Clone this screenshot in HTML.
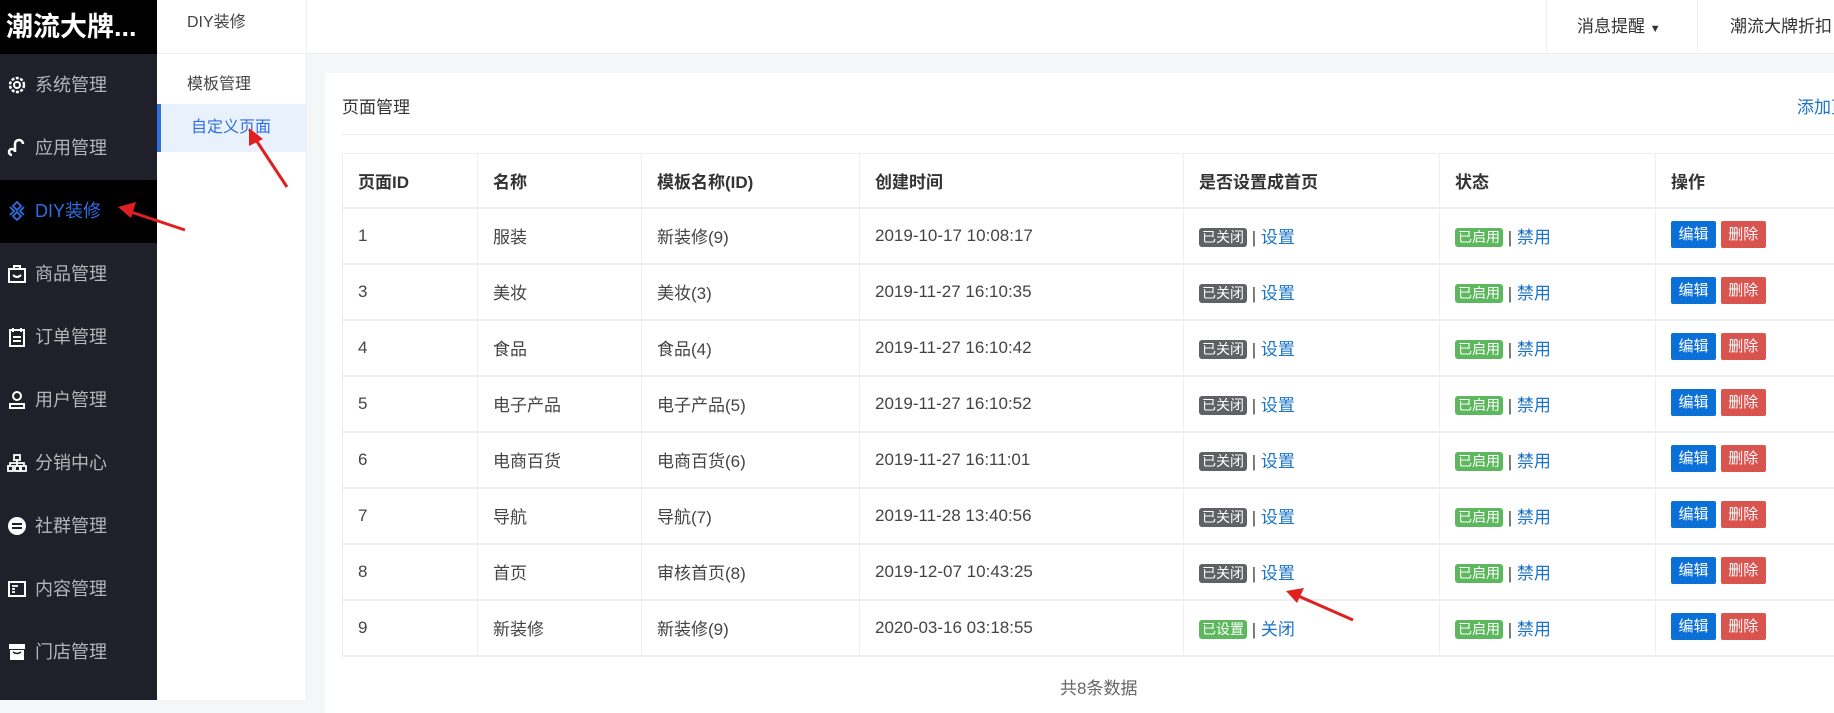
<!DOCTYPE html>
<html><head><meta charset="utf-8"><style>
*{margin:0;padding:0;box-sizing:border-box}
body{width:1834px;height:700px;overflow:hidden;position:relative;background:#f5f6f7;font-family:"Liberation Sans","Noto Sans CJK SC",sans-serif;color:#333}
.abs{position:absolute}
#side{left:0;top:0;width:157px;height:700px;background:#1f2029}
#logo{left:0;top:0;width:157px;height:54px;background:#000;color:#fff;font-size:27px;font-weight:bold;line-height:54px;padding-left:6px;white-space:nowrap;overflow:hidden}
.mi{position:absolute;left:0;width:157px;height:63px;line-height:63px;color:#b4b5ba;font-size:18px;padding-left:35px}
.mi svg{position:absolute;left:7px;top:21px}
.mi.on{background:#000;color:#2f6ee0}
#sub{left:157px;top:0;width:150px;height:700px;background:#fff;border-right:1px solid #eee}
#top{left:307px;top:0;width:1527px;height:54px;background:#fff;border-bottom:1px solid #eee}
.card{left:325px;top:73px;width:1520px;height:640px;background:#fff}
table{position:absolute;left:342px;top:153px;border-collapse:collapse;font-size:17px;table-layout:fixed;width:1500px}
td,th{border:1px solid #eee;border-bottom:2px solid #eee;text-align:left;padding-left:15px;height:56px;color:#444;font-weight:normal;vertical-align:middle;white-space:nowrap}
th{font-weight:bold;color:#333;height:54px}
.b{display:inline-block;font-size:14px;color:#fff;border-radius:3px;padding:0 3px;line-height:19px;position:relative;top:-1px}
.g{background:#5f6165}.gr{background:#5cb85c}
.a{color:#1a73c8}
.btn{display:inline-block;font-size:15px;color:#fff;width:45px;height:27px;line-height:27px;text-align:center;border-radius:2px;position:relative;top:-1px}
</style></head><body>
<div id="side" class="abs">
<div id="logo" class="abs">潮流大牌...</div>
<div class="mi" style="top:54px"><svg width="20" height="20" viewBox="0 0 20 20"><circle cx="10" cy="10" r="7" fill="none" stroke="#fff" stroke-width="2.5" stroke-dasharray="3 1.5"/><circle cx="10" cy="10" r="3" fill="none" stroke="#fff" stroke-width="2"/></svg>系统管理</div>
<div class="mi" style="top:117px"><svg width="20" height="20" viewBox="0 0 20 20"><path d="M5 17a3 3 0 1 1 3-3V6a4 4 0 0 1 8 0" fill="none" stroke="#fff" stroke-width="2.5"/></svg>应用管理</div>
<div class="mi on" style="top:180px"><svg width="20" height="20" viewBox="0 0 20 20"><path d="M10 1l4 4-4 4-4-4zM10 11l4 4-4 4-4-4zM3 6l4 4-4 4M17 6l-4 4 4 4" fill="none" stroke="#2f6ee0" stroke-width="1.8"/></svg>DIY装修</div>
<div class="mi" style="top:243px"><svg width="20" height="20" viewBox="0 0 20 20"><rect x="2" y="5" width="16" height="13" fill="none" stroke="#fff" stroke-width="2"/><path d="M7 5V2h6v3M6 11q4 4 8 0" fill="none" stroke="#fff" stroke-width="2"/></svg>商品管理</div>
<div class="mi" style="top:306px"><svg width="20" height="20" viewBox="0 0 20 20"><rect x="3" y="3" width="14" height="16" fill="none" stroke="#fff" stroke-width="2"/><path d="M6 1v4M14 1v4M6 10h8M6 14h8" stroke="#fff" stroke-width="2"/></svg>订单管理</div>
<div class="mi" style="top:369px"><svg width="20" height="20" viewBox="0 0 20 20"><circle cx="10" cy="6" r="4" fill="none" stroke="#fff" stroke-width="2"/><path d="M3 18v-4h14v4z" fill="none" stroke="#fff" stroke-width="2"/></svg>用户管理</div>
<div class="mi" style="top:432px"><svg width="20" height="20" viewBox="0 0 20 20"><rect x="7" y="2" width="6" height="5" fill="none" stroke="#fff" stroke-width="1.8"/><rect x="1" y="13" width="5" height="5" fill="none" stroke="#fff" stroke-width="1.8"/><rect x="8" y="13" width="5" height="5" fill="none" stroke="#fff" stroke-width="1.8"/><rect x="14" y="13" width="5" height="5" fill="none" stroke="#fff" stroke-width="1.8"/><path d="M10 7v6M3 13v-3h14v3" fill="none" stroke="#fff" stroke-width="1.8"/></svg>分销中心</div>
<div class="mi" style="top:495px"><svg width="20" height="20" viewBox="0 0 20 20"><circle cx="10" cy="10" r="9" fill="#fff"/><path d="M5 8h10M5 12h10" stroke="#1f2029" stroke-width="2"/></svg>社群管理</div>
<div class="mi" style="top:558px"><svg width="20" height="20" viewBox="0 0 20 20"><rect x="2" y="3" width="16" height="14" fill="none" stroke="#fff" stroke-width="2"/><path d="M5 7h6M5 10h3M5 13h3" stroke="#fff" stroke-width="1.8"/></svg>内容管理</div>
<div class="mi" style="top:621px"><svg width="20" height="20" viewBox="0 0 20 20"><rect x="2" y="2" width="16" height="5" fill="#fff"/><rect x="3" y="8" width="14" height="10" fill="#fff"/><path d="M6 10q4 3 8 0" stroke="#1f2029" stroke-width="1.5" fill="none"/></svg>门店管理</div>
</div>
<div id="sub" class="abs">
<div class="abs" style="left:0;top:0;width:149px;height:54px;border-bottom:1px solid #eee;line-height:46px;padding-left:30px;font-size:16px;color:#444">DIY装修</div>
<div class="abs" style="left:30px;top:70px;font-size:16px;color:#444">模板管理</div>
<div class="abs" style="left:0;top:104px;width:149px;height:48px;background:#e9f1fd;border-left:4px solid #2f6ee0;line-height:48px;padding-left:30px;font-size:16px;color:#2f6ee0">自定义页面</div>
</div>
<div id="top" class="abs">
<div class="abs" style="left:1239px;top:0;width:1px;height:54px;background:#eee"></div>
<div class="abs" style="left:1390px;top:0;width:1px;height:54px;background:#eee"></div>
<div class="abs" style="left:1270px;top:12px;font-size:17px;color:#333">消息提醒 <span style="font-size:11px">▼</span></div>
<div class="abs" style="left:1423px;top:12px;font-size:17px;color:#333;white-space:nowrap">潮流大牌折扣</div>
</div>
<div class="card abs"></div>
<div class="abs" style="left:342px;top:93px;font-size:17px;color:#333">页面管理</div>
<div class="abs" style="left:1797px;top:93px;font-size:17px;color:#1a73c8;white-space:nowrap">添加页</div>
<div class="abs" style="left:342px;top:134px;width:1500px;height:1px;background:#eee"></div>
<table>
<colgroup><col style="width:135px"><col style="width:164px"><col style="width:218px"><col style="width:324px"><col style="width:256px"><col style="width:216px"><col style="width:187px"></colgroup>
<tr><th>页面ID</th><th>名称</th><th>模板名称(ID)</th><th>创建时间</th><th>是否设置成首页</th><th>状态</th><th>操作</th></tr>
<tr><td>1</td><td>服装</td><td>新装修(9)</td><td>2019-10-17 10:08:17</td><td><span class="b g">已关闭</span> | <span class="a">设置</span></td><td><span class="b gr">已启用</span> | <span class="a">禁用</span></td><td><span class="btn" style="background:#0a6fd6">编辑</span> <span class="btn" style="background:#d9534f">删除</span></td></tr>
<tr><td>3</td><td>美妆</td><td>美妆(3)</td><td>2019-11-27 16:10:35</td><td><span class="b g">已关闭</span> | <span class="a">设置</span></td><td><span class="b gr">已启用</span> | <span class="a">禁用</span></td><td><span class="btn" style="background:#0a6fd6">编辑</span> <span class="btn" style="background:#d9534f">删除</span></td></tr>
<tr><td>4</td><td>食品</td><td>食品(4)</td><td>2019-11-27 16:10:42</td><td><span class="b g">已关闭</span> | <span class="a">设置</span></td><td><span class="b gr">已启用</span> | <span class="a">禁用</span></td><td><span class="btn" style="background:#0a6fd6">编辑</span> <span class="btn" style="background:#d9534f">删除</span></td></tr>
<tr><td>5</td><td>电子产品</td><td>电子产品(5)</td><td>2019-11-27 16:10:52</td><td><span class="b g">已关闭</span> | <span class="a">设置</span></td><td><span class="b gr">已启用</span> | <span class="a">禁用</span></td><td><span class="btn" style="background:#0a6fd6">编辑</span> <span class="btn" style="background:#d9534f">删除</span></td></tr>
<tr><td>6</td><td>电商百货</td><td>电商百货(6)</td><td>2019-11-27 16:11:01</td><td><span class="b g">已关闭</span> | <span class="a">设置</span></td><td><span class="b gr">已启用</span> | <span class="a">禁用</span></td><td><span class="btn" style="background:#0a6fd6">编辑</span> <span class="btn" style="background:#d9534f">删除</span></td></tr>
<tr><td>7</td><td>导航</td><td>导航(7)</td><td>2019-11-28 13:40:56</td><td><span class="b g">已关闭</span> | <span class="a">设置</span></td><td><span class="b gr">已启用</span> | <span class="a">禁用</span></td><td><span class="btn" style="background:#0a6fd6">编辑</span> <span class="btn" style="background:#d9534f">删除</span></td></tr>
<tr><td>8</td><td>首页</td><td>审核首页(8)</td><td>2019-12-07 10:43:25</td><td><span class="b g">已关闭</span> | <span class="a">设置</span></td><td><span class="b gr">已启用</span> | <span class="a">禁用</span></td><td><span class="btn" style="background:#0a6fd6">编辑</span> <span class="btn" style="background:#d9534f">删除</span></td></tr>
<tr><td>9</td><td>新装修</td><td>新装修(9)</td><td>2020-03-16 03:18:55</td><td><span class="b gr">已设置</span> | <span class="a">关闭</span></td><td><span class="b gr">已启用</span> | <span class="a">禁用</span></td><td><span class="btn" style="background:#0a6fd6">编辑</span> <span class="btn" style="background:#d9534f">删除</span></td></tr>
</table>
<div class="abs" style="left:1060px;top:674px;font-size:17px;color:#666">共8条数据</div>
<svg class="abs" style="left:0;top:0" width="1834" height="700">
<g stroke="#e02020" stroke-width="3" fill="#e02020">
<line x1="185" y1="230" x2="128" y2="211"/><polygon points="118,207 136,202 131,218" stroke="none"/>
<line x1="287" y1="187" x2="254" y2="137"/><polygon points="249,128 263,139 249,146" stroke="none"/>
<line x1="1353" y1="620" x2="1296" y2="595"/><polygon points="1286,591 1304,588 1297,603" stroke="none"/>
</g></svg>
</body></html>
